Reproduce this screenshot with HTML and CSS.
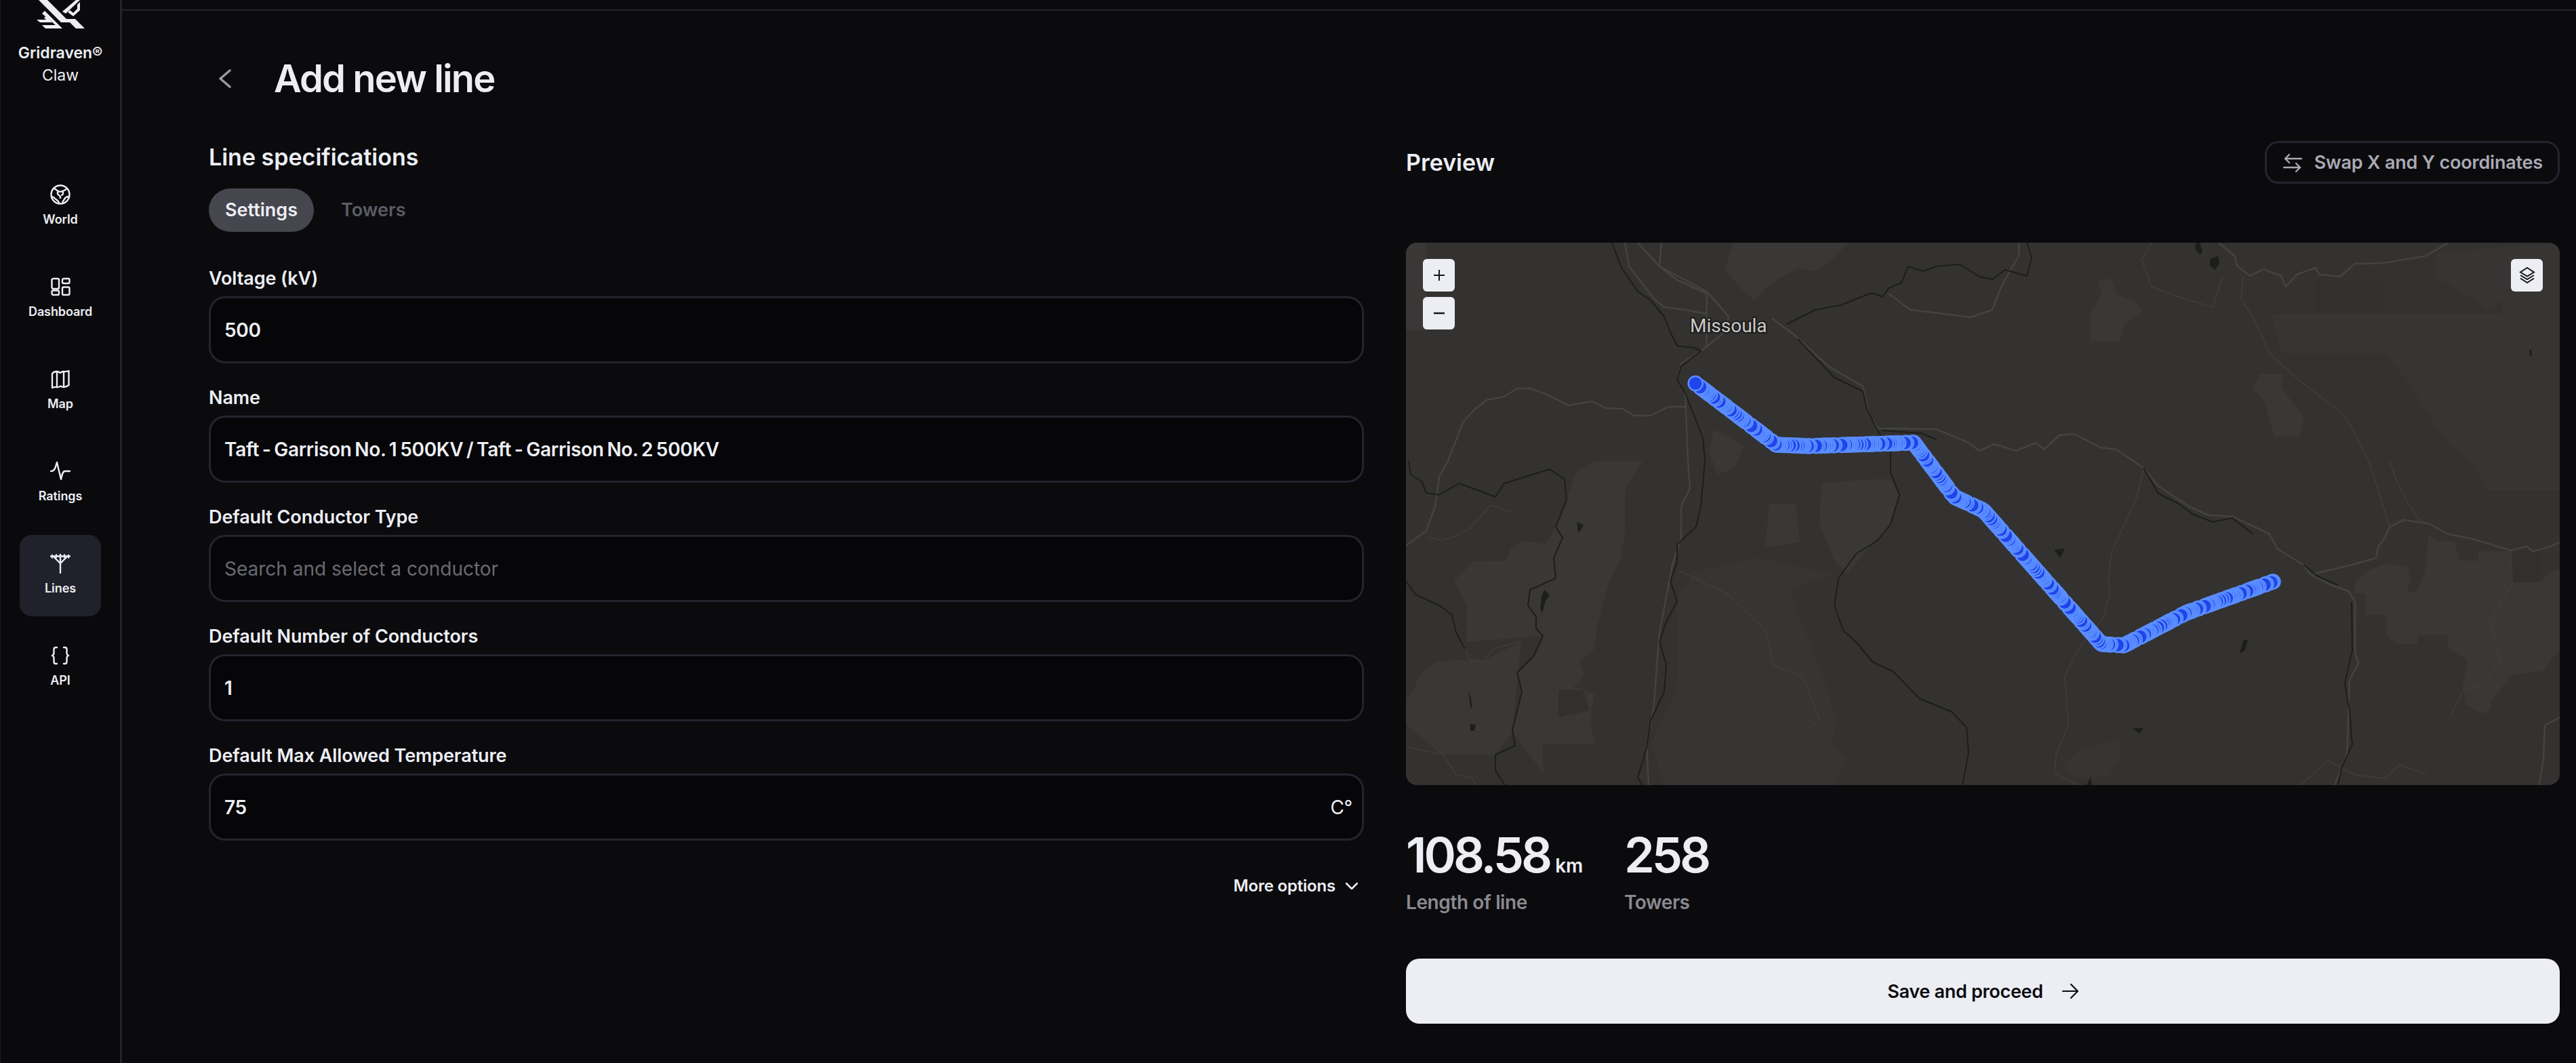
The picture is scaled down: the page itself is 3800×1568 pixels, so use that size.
FILE: index.html
```html
<!DOCTYPE html>
<html lang="en">
<head>
  <meta charset="UTF-8">
  <title>Add new line</title>
  <link rel="stylesheet" href="styles.css">
</head>
<body>
  <aside class="sidebar">
    <svg class="logo" viewBox="0 0 178 42">
      <path d="M57 0H70L98 28H111L125 42H112L103 33H90Z"/>
      <path d="M62 20L66 16L92 42H67L62 37H82Z"/>
      <path d="M54 29H68L65 26L68 24L77 33H59Z"/>
      <path d="M92 17L112 0H118L97 20Z"/>
      <path d="M100 18L103 15L108 19L114 13V7L118 3V15L108 24Z"/>
    </svg>
    <div class="brand">
      <div class="brand-name">Gridraven®</div>
      <div class="brand-sub">Claw</div>
    </div>
    <nav class="nav">
      <a class="nav-item">
        <svg class="nav-icon" viewBox="0 0 30 30">
          <circle cx="15" cy="15" r="13.5"/>
          <path d="M5 6C8 6 9 9 12 10C13 11 17 11 18 10C20 9 22 9 25 6"/>
          <path d="M12 10C10 13 11 15 13 16C15 17 15 18 15 20"/>
          <path d="M18 10C20 13 19 15 17 16"/>
          <path d="M13 28C13 24 9 23 7 21C6 19 4 19 2 18"/>
          <path d="M18 28C18 24 21 23 22 20C24 18 26 18 28 18"/>
        </svg>
        <span>World</span>
      </a>
      <a class="nav-item">
        <svg class="nav-icon" viewBox="0 0 30 30">
          <rect x="2.5" y="3" width="10.5" height="15" rx="2"/>
          <rect x="18" y="3" width="10.5" height="7" rx="2"/>
          <rect x="2.5" y="20.500" width="10.5" height="6.500" rx="2"/>
          <rect x="18" y="15.500" width="10.5" height="11.500" rx="2"/>
        </svg>
        <span>Dashboard</span>
      </a>
      <a class="nav-item">
        <svg class="nav-icon" viewBox="0 0 30 30">
          <path d="M3 7Q6 3.500 10 4Q13 4.500 15 6Q17 4 20 4Q24 4.500 27.500 3V24Q24 27 20 27Q17 26.500 15 25.500Q13 27.500 10 27Q6 26.500 3 28Z"/>
          <path d="M10 4V27M20 4V27"/>
        </svg>
        <span>Map</span>
      </a>
      <a class="nav-item">
        <svg class="nav-icon" viewBox="0 0 30 30">
          <path d="M1 15C4 15 6 14 7.500 10L10 2C11 7 14 18 16 27C17.500 21 18 15 22 15H29"/>
        </svg>
        <span>Ratings</span>
      </a>
      <a class="nav-item active">
        <svg class="nav-icon" viewBox="0 0 30 30">
          <path d="M1 4.500H29M3 3V6.500M9 2.500V6M15 2V6M21 2.500V6M27 3V6.500"/>
          <path d="M6 6L15 15L24 6M15 5V29"/>
        </svg>
        <span>Lines</span>
      </a>
      <a class="nav-item">
        <svg class="nav-icon" viewBox="0 0 30 30">
          <path d="M10 3H8Q5.500 3 5.500 6V11Q5.500 14 3 15Q5.500 16 5.500 19V24Q5.500 27 8 27H10"/>
          <path d="M20 3H22Q24.500 3 24.500 6V11Q24.500 14 27 15Q24.500 16 24.500 19V24Q24.500 27 22 27H20"/>
        </svg>
        <span>API</span>
      </a>
    </nav>
  </aside>

  <main class="main">
    <div class="topbar"></div>
    <div class="content">
      <header class="page-head">
        <svg class="back" viewBox="0 0 18 28"><path d="M16 2L2 14L16 26"/></svg>
        <h1>Add new line</h1>
      </header>

      <div class="columns">
        <section class="specs">
          <h2>Line specifications</h2>
          <div class="tabs">
            <span class="tab active">Settings</span>
            <span class="tab">Towers</span>
          </div>
          <div class="fields">
            <div class="field">
              <label>Voltage (kV)</label>
              <div class="input">500</div>
            </div>
            <div class="field">
              <label>Name</label>
              <div class="input">Taft - Garrison No. 1 500KV / Taft - Garrison No. 2 500KV</div>
            </div>
            <div class="field">
              <label>Default Conductor Type</label>
              <div class="input placeholder">Search and select a conductor</div>
            </div>
            <div class="field">
              <label>Default Number of Conductors</label>
              <div class="input">1</div>
            </div>
            <div class="field">
              <label>Default Max Allowed Temperature</label>
              <div class="input">75<span class="unit">C°</span></div>
            </div>
          </div>
          <div class="more">
            <span>More options</span>
            <svg class="more-icon" viewBox="0 0 18 10"><path d="M1 1L9 9L17 1"/></svg>
          </div>
        </section>

        <section class="preview">
          <div class="preview-head">
            <h2>Preview</h2>
            <button class="swap">
              <svg class="swap-icon" viewBox="0 0 28 28">
                <path d="M27 8H3M9 2L3 8L9 14"/>
                <path d="M1 21H25M19 15L25 21L19 27"/>
              </svg>
              Swap X and Y coordinates
            </button>
          </div>

          <div class="map">
            <svg id="map-svg" class="map-svg" viewBox="0 0 1702 800">
              <g class="land">
                <path d="M71 499L100 470L148 469L154 452L173 440L205 444L221 419L237 379L250 339L278 322L349 322L323 365L323 429L317 465L298 505L282 565L278 599L256 619L263 639L247 655L278 665L272 705L278 739L202 739L202 782L157 722L170 665L164 634L189 609L202 580L90 589L90 535Z"/>
                <path d="M7 669L20 639L43 619L81 615L113 617L170 589L157 722L132 755L52 755L0 710L0 669Z"/>
                <path d="M483 0H652L629 25L604 42L578 37L540 59L514 85L495 69L470 39Z"/>
                <path d="M454 275L498 299L485 332L460 342L447 309Z"/>
                <path d="M613 355L683 349L715 349L728 372L715 415L683 449L651 489L632 469L610 415Z"/>
                <path d="M536 385L575 385L581 442L530 449Z"/>
                <path d="M1260 194L1292 194L1292 214L1325 260L1319 286L1281 286L1265 230L1249 214Z"/>
                <path d="M1021 54L1042 54L1048 77L1075 87L1086 102L1059 122L1053 145L1010 145L1010 102L1026 77Z"/>
                <path d="M1400 502L1416 485L1446 472L1477 479L1482 495L1477 515L1492 514L1503 485L1508 432L1523 440L1546 440L1554 469L1582 469L1582 455L1630 455L1630 502L1673 500L1690 485L1702 482V599L1676 632L1650 635L1630 639L1602 675L1599 689L1589 695L1564 682L1559 652L1566 615L1538 599L1536 579L1492 579L1492 592L1462 592L1446 579L1446 549L1416 549L1416 517L1400 517Z"/>
                <path d="M0 0H30V130H0Z"/>
              </g>
              <g class="land-mid">
                <path d="M425 485L521 465L629 489L565 512L616 642L636 705L629 739L651 759L632 800H381L361 739L400 655L400 522Z"/>
                <path d="M457 735L495 735L495 765L479 769L457 749Z"/>
                <path d="M967 772L992 749L1008 744L1054 732L1054 759L1036 787L992 789Z"/>
                <path d="M1276 105L1618 105L1618 84L1702 84L1702 365L1596 365L1574 327L1542 301L1509 255L1477 204L1444 163L1352 163L1292 163Z"/>
                <path d="M1520 15L1702 0V84H1618L1600 100L1520 50Z"/>
              </g>
              <g class="land-dark">
                <path d="M1340 55H1445L1440 100H1340Z"/>
                <path d="M1630 455H1673V500H1630Z"/>
                <path d="M225 660L262 660L270 690L225 700Z"/>
              </g>

              <g class="road-thin">
                <path d="M125 387L154 397"/>
                <path d="M125 387L94 422L71 434L52 439L30 434"/>
                <path d="M403 484L476 519L530 572L543 624L585 640L610 702L591 720"/>
                <path d="M87 599L94 615L113 617L129 599L170 588"/>
                <path d="M0 744L55 755L74 785L97 789L103 800"/>
                <path d="M1089 332L1076 382L1041 455L1036 502L1038 519L1028 555L992 599L972 639L977 712L959 755L957 782L990 800"/>
                <path d="M1451 322L1462 352L1477 382L1497 412"/>
                <path d="M1630 454L1632 502L1598 560L1615 615L1590 650L1560 660L1540 700"/>
                <path d="M1320 800L1360 764L1400 785L1445 790L1465 770L1505 784"/>
                <path d="M1100 0L1085 25L1100 65L1140 80L1190 95L1205 50"/>
                <path d="M1235 49L1232 82L1250 112L1275 165L1320 205L1385 255L1420 320L1451 419"/>
              </g>
              <g class="road">
                <path d="M342 0L374 35L444 72L476 109L470 132L435 160L406 178L400 202"/>
                <path d="M323 0L329 35L368 85L381 95L412 99L444 105"/>
                <path d="M377 0L374 35L400 55L444 75L443 155"/>
                <path d="M540 112L572 135L623 182L674 212L683 252L696 274L782 275L830 295L846 307L868 297L900 307L929 295L941 305L964 284L986 282L1024 302L1047 305L1088 332L1110 359L1155 389L1184 402L1219 404L1273 429L1286 452L1324 475L1334 489L1365 505L1390 514L1400 529V605L1405 620L1392 645L1388 755L1370 800"/>
                <path d="M712 75L744 99L795 105L833 110L865 99L878 65L904 19V0"/>
                <path d="M62 322L84 265L100 247L119 232L145 227L164 215L183 215L208 224L240 240L275 234L294 244L320 245L336 255L361 255L387 242L412 242"/>
                <path d="M412 222L416 322L419 362L406 389L406 435L393 475L374 575L365 689L355 742L358 800"/>
                <path d="M62 322L49 345L43 389L30 425L0 447"/>
                <path d="M1337 489L1400 474L1431 465L1434 449L1444 435L1451 419L1472 409L1508 414L1538 430L1574 437L1630 454L1653 448L1663 455L1686 449L1702 442"/>
                <path d="M1199 0L1222 19L1227 35L1245 49L1265 39L1291 49L1298 65L1314 47L1342 37L1347 47L1378 50L1400 31L1441 30L1503 20L1538 0"/>
                <path d="M1702 700L1680 712L1678 760L1672 800"/>
              </g>
              <g class="river">
                <path d="M304 0L317 35L342 72L361 85L381 109L390 132L400 152L425 155L435 160L406 182L400 202L412 222L438 288L441 322L435 389L428 419L400 445L400 472L390 499L400 529L384 559L374 589L384 622L381 662L361 705L355 745L342 789L349 800"/>
                <path d="M4 322L7 342L23 352L30 369L49 372L78 355L106 365L132 375L145 355L212 334L234 349L237 379L221 419L231 435L218 465L221 495L183 512L180 535L192 552L192 569L202 580L189 609L164 634L171 662L157 719L161 742L132 755L132 779L146 800"/>
                <path d="M0 499L14 519L49 535L68 549L74 575L87 599"/>
                <path d="M578 142L632 199L674 219L680 245L693 272L715 309V339L728 372L715 415L696 439L664 459L638 495L632 535L645 572L664 589L689 619L718 632L757 672L805 692L827 715L830 752L821 800"/>
                <path d="M562 120L604 99L642 92L687 74L703 80L712 67L731 59L741 35L763 42L782 35L817 32L846 50L865 54L884 40L916 49L923 22L916 0"/>
                <path d="M702 277L760 281L782 290"/>
                <path d="M1088 332L1110 370L1140 385L1160 400L1190 412L1219 406L1250 430"/>
                <path d="M1324 475L1345 492L1375 505"/>
                <path d="M1395 605L1385 650L1392 690L1396 740L1380 775L1375 800"/>
                <path d="M1395 530L1396 605"/>
              </g>
              <g class="lake">
                <path d="M252 412L262 416L258 424L254 428Z"/>
                <path d="M204 512L212 520L206 528L201 546L198 540L200 522Z"/>
                <path d="M92 660L96 672L98 688L95 684Z"/>
                <path d="M95 710L103 711L101 720L95 720Z"/>
                <path d="M956 453L972 451L965 465Z"/>
                <path d="M1235 586L1242 586L1238 601L1230 606L1232 598Z"/>
                <path d="M1071 716L1088 716L1082 724Z"/>
                <path d="M1004 800L1010 788L1012 800Z"/>
                <path d="M1165 0H1171L1175 12L1172 18L1164 10Z"/>
                <path d="M1186 24L1198 20L1200 30L1194 40L1186 34Z"/>
                <path d="M1657 158L1660 158L1661 167L1658 167Z"/>
              </g>
              <text class="map-label" x="419" y="132">Missoula</text>
            </svg>
            <div class="map-zoom">
              <div class="map-btn">
                <svg viewBox="0 0 18 18"><path d="M9 1V17M1 9H17"/></svg>
              </div>
              <div class="map-btn">
                <svg class="minus" viewBox="0 0 18 18"><path d="M1 9H17"/></svg>
              </div>
            </div>
            <div class="map-btn map-layers">
              <svg viewBox="0 0 24 24">
                <path d="M12 1L22 7.500L12 13.500L2 7.500Z"/>
                <path d="M2 12L12 18L22 12"/>
                <path d="M2 16.500L12 23L22 16.500"/>
              </svg>
            </div>
          </div>

          <div class="stats">
            <div class="stat">
              <div class="stat-value">108.58<span class="stat-unit">km</span></div>
              <div class="stat-label">Length of line</div>
            </div>
            <div class="stat">
              <div class="stat-value">258</div>
              <div class="stat-label">Towers</div>
            </div>
          </div>

          <button class="save">
            Save and proceed
            <svg class="save-icon" viewBox="0 0 24 24"><path d="M1 12H23M13 2L23 12L13 22"/></svg>
          </button>
        </section>
      </div>
    </div>
  </main>
  <script src="map.js"></script>
</body>
</html>
```

FILE: styles.css
```css
* {
  box-sizing: border-box;
}

html, body {
  height: 100%;
}

body {
  margin: 0;
  display: flex;
  overflow: hidden;
  background-color: #0b0b0e;
  color: #edeef3;
  font-family: Inter, "Noto Sans", sans-serif;
}

.sidebar {
  width: 180px;
  flex-shrink: 0;
  border-left: 1px solid #1c1c24;
  border-right: 3px solid #24242f;
  background-color: #0a0a0d;
}

.logo {
  display: block;
  width: 178px;
  height: 42px;
  margin-left: -1px;
}

.logo path {
  fill: #edeef3;
}

.brand {
  margin-top: 21px;
  text-align: center;
}

.brand-name {
  font-size: 23px;
  font-weight: 600;
  line-height: 30px;
}

.brand-sub {
  font-size: 23px;
  font-weight: 400;
  line-height: 36px;
}

.nav {
  display: flex;
  flex-direction: column;
  align-items: center;
  gap: 16px;
  margin-top: 116px;
}

.nav-item {
  display: flex;
  flex-direction: column;
  align-items: center;
  width: 120px;
  height: 120px;
  padding-top: 27px;
  gap: 8px;
  border-radius: 18px;
  font-size: 18px;
  font-weight: 600;
  line-height: 28px;
  letter-spacing: -0.1px;
}

.nav-item.active {
  background-color: #20212a;
}

.nav-icon {
  width: 30px;
  height: 30px;
  fill: none;
  stroke: #edeef3;
  stroke-width: 2.400;
  stroke-linecap: round;
  stroke-linejoin: round;
}

.main {
  flex: 1;
}

.topbar {
  height: 16px;
  border-bottom: 2px solid #24242f;
}

.content {
  padding: 70px 24px 0 128px;
}

.page-head {
  display: flex;
  align-items: center;
  gap: 63px;
  padding-left: 15px;
}

.back {
  width: 18px;
  height: 28px;
  fill: none;
  stroke: #9a9aa3;
  stroke-width: 3.500;
  stroke-linecap: round;
  stroke-linejoin: round;
}

h1 {
  margin: 0;
  font-size: 56px;
  font-weight: 600;
  line-height: 60px;
  letter-spacing: -1.9px;
}

h2 {
  margin: 0;
  font-size: 34px;
  font-weight: 600;
  line-height: 40px;
}

.columns {
  display: grid;
  grid-template-columns: 1704px 1702px;
  column-gap: 62px;
  margin-top: 62px;
}

.specs {
  padding-top: 4px;
}

.tabs {
  display: flex;
  align-items: center;
  margin-top: 26px;
}

.tab {
  height: 64px;
  padding: 0 24px;
  margin-right: 16px;
  border-radius: 32px;
  color: #5c5c66;
  font-size: 27px;
  font-weight: 600;
  line-height: 64px;
}

.tab.active {
  background-color: #46464f;
  color: #edeef3;
}

.fields {
  display: flex;
  flex-direction: column;
  gap: 33px;
  margin-top: 51px;
}

.field label {
  display: block;
  padding-top: 1px;
  margin-bottom: 9px;
  font-size: 27px;
  font-weight: 600;
  line-height: 34px;
  letter-spacing: -0.1px;
}

.input {
  display: flex;
  align-items: center;
  justify-content: space-between;
  height: 99px;
  padding: 0 20px;
  border: 3px solid #24242f;
  border-radius: 24px;
  background-color: #060608;
  font-size: 28px;
  font-weight: 600;
  letter-spacing: -0.3px;
  word-spacing: -2px;
}

.input.placeholder {
  color: #6a6a72;
  font-weight: 400;
  letter-spacing: 0;
  word-spacing: 0;
}

.unit {
  margin-right: -6px;
  font-weight: 400;
}

.more {
  display: flex;
  align-items: center;
  justify-content: flex-end;
  gap: 15px;
  margin-top: 51px;
  padding-right: 9px;
  font-size: 24px;
  font-weight: 600;
  line-height: 32px;
  letter-spacing: -0.2px;
}

.more-icon {
  width: 18px;
  height: 10px;
  fill: none;
  stroke: #edeef3;
  stroke-width: 2.500;
  stroke-linecap: round;
  stroke-linejoin: round;
}

.preview-head {
  display: flex;
  align-items: center;
  justify-content: space-between;
  height: 63px;
}

.swap {
  display: flex;
  align-items: center;
  gap: 18px;
  height: 63px;
  padding: 0 22px 0 24px;
  border: 3px solid #24242f;
  border-radius: 20px;
  background-color: transparent;
  color: #a9a9b3;
  font-family: inherit;
  font-size: 27px;
  font-weight: 600;
  letter-spacing: -0.2px;
}

.swap-icon {
  width: 28px;
  height: 28px;
  fill: none;
  stroke: #a9a9b3;
  stroke-width: 2.400;
  stroke-linecap: round;
  stroke-linejoin: round;
}

.map {
  position: relative;
  height: 800px;
  margin-top: 87px;
  border-radius: 16px;
  overflow: hidden;
  background-color: #333230;
}

.map-svg {
  display: block;
  width: 100%;
  height: 100%;
}

.land path {
  fill: #393836;
}

.land-mid path {
  fill: #363533;
}

.land-dark path {
  fill: #31302e;
}

.road path,
.road-thin path,
.river path {
  fill: none;
  stroke-linejoin: round;
}

.road path {
  stroke: #444341;
  stroke-width: 2.500;
}

.road-thin path {
  stroke: #3f3e3c;
  stroke-width: 1.500;
}

.river path {
  stroke: #1d1e1c;
  stroke-width: 2;
}

.lake path {
  fill: #1d1e1c;
}

.map-label {
  fill: #c9c9c7;
  stroke: #1c1c1b;
  stroke-width: 4px;
  paint-order: stroke;
  font-family: Roboto, sans-serif;
  font-size: 28px;
}

.tower {
  fill: #1f44ea;
  stroke: #5a8dff;
  stroke-width: 2.500;
}

.map-zoom {
  position: absolute;
  top: 24px;
  left: 25px;
  display: flex;
  flex-direction: column;
  gap: 8px;
}

.map-btn {
  display: flex;
  align-items: center;
  justify-content: center;
  width: 47px;
  height: 48px;
  border-radius: 6px;
  background-color: #edeef3;
}

.map-btn svg {
  width: 18px;
  height: 18px;
  fill: none;
  stroke: #15161a;
  stroke-width: 2;
}

.map-btn svg.minus {
  stroke-width: 2.600;
}

.map-layers {
  position: absolute;
  top: 24px;
  right: 25px;
}

.map-btn.map-layers svg {
  width: 24px;
  height: 24px;
  stroke-width: 2;
}

.stats {
  display: flex;
  gap: 61px;
  margin-top: 63px;
}

.stat-value {
  font-size: 72px;
  font-weight: 600;
  line-height: 80px;
  letter-spacing: -4px;
}

.stat-unit {
  margin-left: 8px;
  font-size: 28px;
  line-height: 1;
  letter-spacing: -0.2px;
}

.stat-label {
  margin-top: 13px;
  color: #8a8a90;
  font-size: 28px;
  font-weight: 600;
  line-height: 34px;
  letter-spacing: -0.4px;
}

.save {
  display: flex;
  align-items: center;
  justify-content: center;
  gap: 28px;
  width: 100%;
  height: 96px;
  margin-top: 66px;
  border: none;
  border-radius: 20px;
  background-color: #edeef3;
  color: #0b0c10;
  font-family: inherit;
  font-size: 27px;
  font-weight: 600;
  letter-spacing: -0.3px;
}

.save-icon {
  width: 24px;
  height: 24px;
  fill: none;
  stroke: #0b0c10;
  stroke-width: 2.200;
  stroke-linecap: round;
  stroke-linejoin: round;
}
```

FILE: map.js
```js
// Waypoints of the line in map coordinates, towers are laid out along them
const WAYPOINTS = [
  [425, 206], [546, 298], [594, 300], [749, 295], [809, 375],
  [852, 395], [1026, 592], [1059, 594], [1151, 546], [1279, 500]
];
const TOWER_COUNT = 258;
const TOWER_RADIUS = 10.5;

const svg = document.getElementById("map-svg");

function segmentLength(a, b) {
  return Math.hypot(b[0] - a[0], b[1] - a[1]);
}

function pointAt(dist) {
  for (let i = 0; i < WAYPOINTS.length - 1; i++) {
    const len = segmentLength(WAYPOINTS[i], WAYPOINTS[i + 1]);
    if (dist <= len) {
      const t = dist / len;
      return [
        WAYPOINTS[i][0] + (WAYPOINTS[i + 1][0] - WAYPOINTS[i][0]) * t,
        WAYPOINTS[i][1] + (WAYPOINTS[i + 1][1] - WAYPOINTS[i][1]) * t
      ];
    }
    dist -= len;
  }
  return WAYPOINTS[WAYPOINTS.length - 1];
}

let total = 0;
for (let i = 0; i < WAYPOINTS.length - 1; i++) {
  total += segmentLength(WAYPOINTS[i], WAYPOINTS[i + 1]);
}

// Spans between towers are not even, so vary the step
const steps = [];
for (let i = 0; i < TOWER_COUNT; i++) {
  steps.push(0.7 + Math.pow(Math.abs(Math.sin(i * 1.7) * Math.cos(i * 0.37)), 3) * 2);
}
const stepSum = steps.reduce((a, b) => a + b, 0);

// The first tower sits on top of the others
let dist = total;
for (let i = TOWER_COUNT - 1; i >= 0; i--) {
  const [x, y] = pointAt(dist);
  const tower = document.createElementNS("http://www.w3.org/2000/svg", "circle");
  tower.setAttribute("class", "tower");
  tower.setAttribute("cx", x);
  tower.setAttribute("cy", y);
  tower.setAttribute("r", TOWER_RADIUS);
  svg.appendChild(tower);
  dist -= (steps[i] / stepSum) * total;
}
```
